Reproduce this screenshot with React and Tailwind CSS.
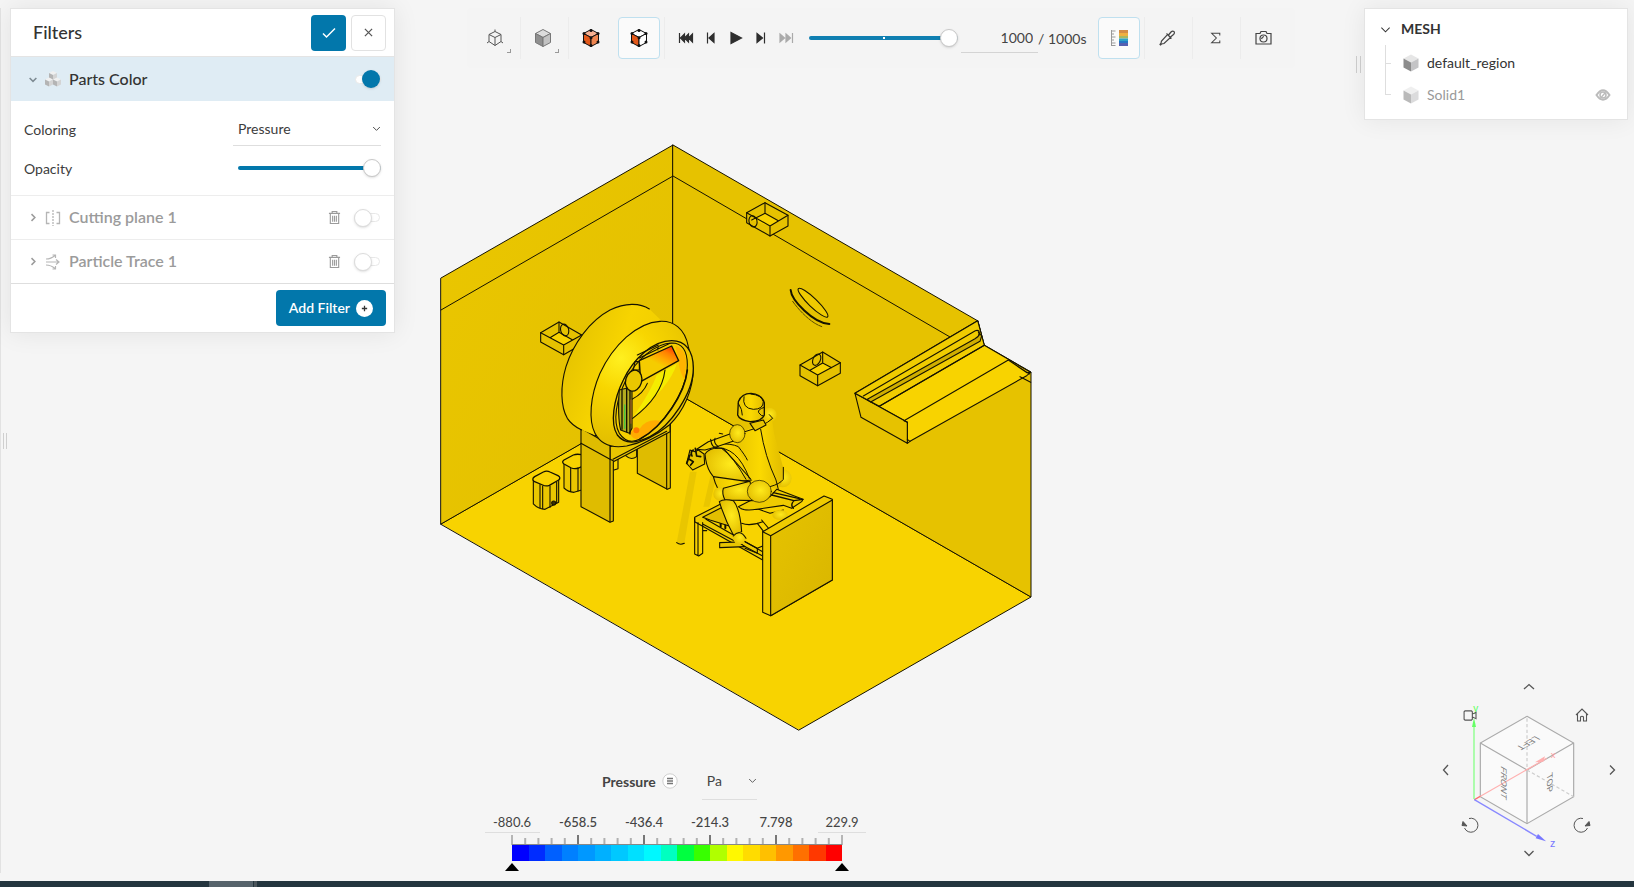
import React from "react";

const ICON = "h-4 w-4 fill-none stroke-current";

/* ---------- small icons ---------- */

function Chevron({ dir = "down", className = "h-3 w-3", width = 1.3 }) {
  const d = {
    down: "M1.5 4 6 8.500 10.500 4",
    right: "M4 1.500 8.500 6 4 10.500",
    left: "M8 1 3.500 6 8 11",
    up: "M1 8 6 3.500 11 8",
  }[dir];
  return (
    <svg viewBox="0 0 12 12" className={`fill-none stroke-current ${className}`} strokeWidth={width} aria-hidden="true">
      <path d={d} />
    </svg>
  );
}

function Cube({ top, left, right, stroke = "none", dots = false, className = "h-[18px] w-[18px]", faded = false }) {
  return (
    <svg viewBox="0 0 18 18" className={`${className} ${faded ? "opacity-60" : ""}`} aria-hidden="true">
      <g stroke={stroke} strokeWidth="1" strokeLinejoin="round">
        <path d="M9 .5 16.500 4.500 9 8.500 1.500 4.500Z" fill={top} />
        <path d="M1.500 4.500 9 8.500V17.500L1.500 13.500Z" fill={left} />
        <path d="M16.500 4.500 9 8.500V17.500L16.500 13.500Z" fill={right} />
      </g>
      {dots && (
        <g fill="#111">
          {[[9, 1.500], [16, 4.500], [2, 4.500], [9, 8.800], [2, 13], [16, 13], [9, 16.500]].map(([x, y]) => (
            <circle key={`${x}-${y}`} cx={x} cy={y} r="1.500" />
          ))}
        </g>
      )}
    </svg>
  );
}

function PartsIcon() {
  const cube = (x, y) => (
    <g transform={`translate(${x} ${y})`}>
      <path d="M4 0 8 2 4 4 0 2Z" fill="#f0f0f0" />
      <path d="M0 2 4 4V9L0 7Z" fill="#b4b4b4" />
      <path d="M8 2 4 4V9L8 7Z" fill="#d4d4d4" />
    </g>
  );
  return (
    <svg viewBox="0 0 16 16" className="h-4 w-4" aria-hidden="true">
      {cube(4, 0)}
      {cube(0, 6.5)}
      {cube(8, 6.5)}
    </svg>
  );
}

function CutIcon() {
  return (
    <svg viewBox="0 0 16 16" className={ICON} strokeWidth="1.300" aria-hidden="true">
      <path d="M4.500 2.500H1.500V13.500H4.500M11.500 2.500H14.500V13.500H11.500" />
      <path d="M8 0V16" strokeDasharray="2 1" />
    </svg>
  );
}

function TraceIcon() {
  return (
    <svg viewBox="0 0 16 16" className={ICON} strokeWidth="1.200" aria-hidden="true">
      <path d="M1 8H14M11 5.500 14 8 11 10.500M1 5Q6 5 10 1.500M7.500 1H10.500V4M1 11Q6 11 10 14.500M7.500 15H10.500V12" />
    </svg>
  );
}

function TrashIcon() {
  return (
    <svg viewBox="0 0 14 16" className="h-[15px] w-[13px] fill-none stroke-current" strokeWidth="1.200" aria-hidden="true">
      <path d="M1 3.500H13M4.500 3V1.500H9.500V3M2.500 3.500V14.500H11.500V3.500M5 6V12.500M7 6V12.500M9 6V12.500" />
    </svg>
  );
}

/* ---------- filter panel ---------- */

function Toggle({ label, on = false }) {
  return (
    <label className="flex w-[26px] items-center">
      <input type="checkbox" defaultChecked={on} aria-label={label} className="peer sr-only" />
      <span className="flex h-[9px] w-full items-center rounded-full border border-[#e8e8e8] bg-white peer-checked:justify-end">
        <span
          className={
            on
              ? "h-[18px] w-[18px] shrink-0 rounded-full bg-[#0277ab] shadow"
              : "-ml-px h-[18px] w-[18px] shrink-0 rounded-full border border-[#dcdcdc] bg-white shadow-sm"
          }
        />
      </span>
    </label>
  );
}

function FilterRow({ icon, name }) {
  return (
    <li className="flex h-11 items-center border-t border-[#ededed] pr-[14px] pl-4 text-[#9b9b9b]">
      <button type="button" className="flex flex-1 items-center text-left" aria-expanded="false">
        <Chevron dir="right" className="h-[9px] w-3" width={2} />
        <span className="ml-[6px] text-[#b5b5b5]">{icon}</span>
        <span className="ml-2 pb-[2px] text-base font-semibold">{name}</span>
      </button>
      <button type="button" aria-label={`Delete ${name}`} className="mr-[13px]">
        <TrashIcon />
      </button>
      <Toggle label={`Enable ${name}`} />
    </li>
  );
}

const SLIDER =
  "h-[18px] cursor-pointer appearance-none bg-transparent [&::-webkit-slider-thumb]:-mt-[7px] [&::-webkit-slider-thumb]:h-[18px] [&::-webkit-slider-thumb]:w-[18px] [&::-webkit-slider-thumb]:appearance-none [&::-webkit-slider-thumb]:rounded-full [&::-webkit-slider-thumb]:border [&::-webkit-slider-thumb]:border-[#c8c8c8] [&::-webkit-slider-thumb]:bg-white [&::-webkit-slider-thumb]:shadow-sm [&::-webkit-slider-runnable-track]:h-1 [&::-webkit-slider-runnable-track]:rounded-sm";

function FiltersPanel() {
  return (
    <section className="w-[385px] border border-[#e4e4e4] bg-white shadow-[0_0_24px_rgba(0,0,0,0.08)]">
      <header className="flex h-12 items-center border-b border-[#e4e4e4] pr-2 pl-[22px]">
        <h2 className="flex-1 pb-[2px] text-lg font-medium text-[#333]">Filters</h2>
        <button type="button" aria-label="Apply" className="flex h-9 w-[35px] items-center justify-center rounded bg-[#0277ab] text-white">
          <svg viewBox="0 0 14 12" className="h-3 w-[14px] fill-none stroke-current" strokeWidth="1.500" aria-hidden="true">
            <path d="M1 6.500 4.500 10 13 1.500" />
          </svg>
        </button>
        <button type="button" aria-label="Close" className="ml-[5px] flex h-9 w-[35px] items-center justify-center rounded border border-[#e2e2e2] text-[#555]">
          <svg viewBox="0 0 10 10" className="h-[9px] w-[9px] fill-none stroke-current" strokeWidth="1.400" aria-hidden="true">
            <path d="M1 1 9 9M9 1 1 9" />
          </svg>
        </button>
      </header>

      <div className="flex h-11 items-center bg-[#dfecf4] pr-[13px] pl-4">
        <button type="button" className="flex flex-1 items-center text-left" aria-expanded="true">
          <span className="text-[#7d8a92]">
            <Chevron className="h-[9px] w-3" width={2} />
          </span>
          <span className="ml-[6px]">
            <PartsIcon />
          </span>
          <span className="ml-2 text-base font-medium text-[#333]">Parts Color</span>
        </button>
        <Toggle label="Enable Parts Color" on />
      </div>

      <div className="flex flex-col gap-[5px] pt-[11px] pr-[13px] pb-[10px] pl-[13px] text-sm text-[#3c3c3c]">
        <div className="flex h-[34px] items-center justify-between">
          <label htmlFor="coloring" className="pt-[2px]">Coloring</label>
          <div className="flex h-[34px] w-[148px] items-center border-b border-[#dedede]">
            <select id="coloring" className="flex-1 appearance-none bg-transparent pl-[5px]">
              <option>Pressure</option>
            </select>
            <Chevron className="h-[9px] w-[9px]" width={1.2} />
          </div>
        </div>
        <div className="flex h-[34px] items-center justify-between">
          <label htmlFor="opacity" className="pt-[2px]">Opacity</label>
          <input
            id="opacity"
            type="range"
            defaultValue="100"
            className={`${SLIDER} w-[143px] [&::-webkit-slider-runnable-track]:bg-[#0277ab]`}
          />
        </div>
      </div>

      <ul>
        <FilterRow icon={<CutIcon />} name="Cutting plane 1" />
        <FilterRow icon={<TraceIcon />} name="Particle Trace 1" />
      </ul>

      <footer className="flex h-[49px] items-center justify-end border-t border-[#dedede] pr-2">
        <button type="button" className="flex h-9 items-center gap-[6px] rounded bg-[#0277ab] px-[13px] text-sm font-semibold text-white">
          Add Filter
          <svg viewBox="0 0 16 16" className="h-[17px] w-[17px]" aria-hidden="true">
            <circle cx="8" cy="8" r="8" fill="#fff" />
            <path d="M8 5.500V10.500M5.500 8H10.500" stroke="#333" strokeWidth="1.200" />
          </svg>
        </button>
      </footer>
    </section>
  );
}

/* ---------- toolbar ---------- */

function Tool({ label, active = false, divider = false, corner = false, children }) {
  return (
    <div className={`flex h-[42px] w-12 items-center ${divider ? "border-r border-[#ececec]" : ""}`}>
      <button
        type="button"
        aria-label={label}
        className={
          active
            ? "mx-[1px] flex h-[42px] w-[42px] items-center justify-center rounded border border-[#bfe0ef] bg-[#fafafa]"
            : "relative flex h-[42px] w-[44px] items-center justify-center text-[#444]"
        }
      >
        {children}
        {corner && <span className="absolute right-[6px] bottom-[6px] h-1 w-1 border-r border-b border-[#999]" />}
      </button>
    </div>
  );
}

const PLAYBACK = [
  { label: "First step", d: "M1.500 2V12M6.500 3 2.500 7 6.500 11ZM10.500 3 6.500 7 10.500 11ZM14.500 3 10.500 7 14.500 11Z" },
  { label: "Previous step", d: "M4.500 1.500V12.500M11 2.500 6 7 11 11.500Z" },
  { label: "Play", d: "M3 1.500 13.500 7 3 12.500Z" },
  { label: "Next step", d: "M11.500 1.500V12.500M4 2.500 9.500 7 4 11.500Z" },
  { label: "Last step", d: "M14.500 2V12M2 3 6.500 7 2 11ZM8 3 12.500 7 8 11Z", off: true },
];

function Toolbar() {
  return (
    <div className="ml-[37px] flex h-15 items-center self-start rounded bg-[#f4f4f4] px-[6px]" role="toolbar">
      <Tool label="Projection" divider corner>
        <svg viewBox="0 0 18 18" className="h-[18px] w-[18px] fill-none" stroke="#555" strokeWidth="1" strokeLinejoin="round" aria-hidden="true">
          <path d="M9 2.500 15 5.500V12.500L9 16.500 3 12.500V5.500ZM3 5.500 9 8.500 15 5.500M9 8.500V16.500M9 .5V2.500M1 14 3 12.500M17 14 15 12.500" />
        </svg>
      </Tool>
      <Tool label="Render mode" divider corner>
        <Cube top="#dcdcdc" left="#8f8f8f" right="#c2c2c2" stroke="#777" />
      </Tool>
      <Tool label="Show surfaces">
        <Cube top="#f6b092" left="#e2581a" right="#ee8550" stroke="#111" dots />
      </Tool>
      <Tool label="Show edges" active divider>
        <Cube top="#fff" left="#e2581a" right="#fff" stroke="#111" dots />
      </Tool>

      <div className="flex w-[432px] items-center pl-2">
        {PLAYBACK.map((b) => (
          <button key={b.label} type="button" aria-label={b.label} disabled={b.off} className="flex h-8 w-[25px] items-center justify-center">
            <svg viewBox="0 0 16 14" className={`h-[14px] w-4 ${b.off ? "text-[#aaa]" : "text-[#2e2e2e]"}`} fill="currentColor" stroke="currentColor" strokeWidth="1.200" aria-hidden="true">
              <path d={b.d} />
            </svg>
          </button>
        ))}
        <input
          type="range"
          aria-label="Time step"
          defaultValue="100"
          className={`${SLIDER} ml-[11px] w-[149px] [&::-webkit-slider-runnable-track]:[background:linear-gradient(#fff,#fff)_center/2px_2px_no-repeat,#0f7fb1]`}
        />
        <input
          type="text"
          aria-label="Current time"
          defaultValue="1000"
          className="ml-[3px] h-[30px] w-[77px] border-b border-[#d4d4d4] bg-transparent pr-[5px] text-right text-sm text-[#444]"
        />
        <span className="pt-[2px] text-sm text-[#444]">/ 1000s</span>
      </div>

      <Tool label="Legend" active divider>
        <svg viewBox="0 0 17 16" className="h-4 w-[17px]" aria-hidden="true">
          <path d="M.5 0V16M0 1H4.500M0 4H3M0 7H4.500M0 10H3M0 13H4.500M0 15.500H4.500" stroke="#999" fill="none" />
          <path d="M8 0H17V3H8Z" fill="#d58c46" />
          <path d="M8 3H17V6H8Z" fill="#f0b040" />
          <path d="M8 6H17V8.500H8Z" fill="#a9b860" />
          <path d="M8 8.500H17V11H8Z" fill="#2fa3c4" />
          <path d="M8 11H17V13H8Z" fill="#2477c4" />
          <path d="M8 13H17V16H8Z" fill="#5560b0" />
        </svg>
      </Tool>
      <Tool label="Pick value" divider>
        <svg viewBox="0 0 16 16" className={ICON} strokeWidth="1.200" aria-hidden="true">
          <path d="M8.500 4.500 11.500 7.500 5 13.500 2.500 14 1.500 15 1 14.500 2 13 2.500 11ZM7.500 3.500 12.500 8.500M9.500 5 12 2Q13.500.5 15 1.500 16 3 14.500 4.500L11.500 7" />
        </svg>
      </Tool>
      <Tool label="Statistics" divider>
        <svg viewBox="0 0 12 14" className="h-3 w-[11px] fill-none stroke-current" strokeWidth="1.200" aria-hidden="true">
          <path d="M11 4V1.500H1.500L7 7 1.500 12.500H11V10" />
        </svg>
      </Tool>
      <Tool label="Screenshot">
        <svg viewBox="0 0 17 16" className="h-4 w-[17px] fill-none stroke-current" strokeWidth="1.200" aria-hidden="true">
          <path d="M1 3.500H5L6 1.500H11L12 3.500H16V14H1Z" />
          <circle cx="8.500" cy="8.500" r="3.500" />
          <path d="M6.500 9Q7 7 9 6.500" />
        </svg>
      </Tool>
    </div>
  );
}

/* ---------- 3D scene ---------- */

const WALL = "#e6c200";
const FLOOR = "#f8d300";
const SIDE = "#dfbc00";

function Scene() {
  return (
    <svg viewBox="430 135 610 605" className="mt-[67px] w-[610px] shrink-0" role="img" aria-label="Pressure on room surfaces" strokeLinejoin="round" strokeLinecap="round">
      <defs>
        <linearGradient id="leftWall" x1="0" y1="0" x2="1" y2="1">
          <stop offset="0" stopColor="#ebc700" />
          <stop offset="1" stopColor="#e2bf00" />
        </linearGradient>
        <linearGradient id="drum" x1="0" y1="0" x2="1" y2="0.4">
          <stop offset="0" stopColor="#dfbd00" />
          <stop offset="0.5" stopColor="#f7d400" />
          <stop offset="1" stopColor="#edc900" />
        </linearGradient>
        <radialGradient id="rim" gradientUnits="userSpaceOnUse" cx="272" cy="205" r="250">
          <stop offset="0" stopColor="#fff020" />
          <stop offset="0.4" stopColor="#f8d600" />
          <stop offset="1" stopColor="#e4c000" />
        </radialGradient>
        <radialGradient id="ball" cx="0.55" cy="0.45" r="0.6">
          <stop offset="0" stopColor="#ffea1c" />
          <stop offset="1" stopColor="#e3be00" />
        </radialGradient>
        <linearGradient id="body" x1="0" y1="0" x2="1" y2="0">
          <stop offset="0" stopColor="#e9c600" />
          <stop offset="0.5" stopColor="#fbd900" />
          <stop offset="1" stopColor="#e0bb00" />
        </linearGradient>
        <linearGradient id="panel" x1="0" y1="0" x2="1" y2="1">
          <stop offset="0" stopColor="#e6c300" />
          <stop offset="1" stopColor="#d9b600" />
        </linearGradient>
        <linearGradient id="hot" gradientUnits="userSpaceOnUse" x1="375" y1="260" x2="425" y2="165">
          <stop offset="0.350" stopColor="#f5cc00" />
          <stop offset="0.550" stopColor="#ffa800" />
          <stop offset="0.750" stopColor="#ff8000" />
          <stop offset="0.900" stopColor="#ff4a00" />
        </linearGradient>
      </defs>

      {/* room shell */}
      <g stroke="#151200" strokeWidth="1">
        <path d="M441 524 582 443 673 391 1031 597 799 730Z" fill={FLOOR} />
        <path d="M441 278 673 145V391L441 524Z" fill="url(#leftWall)" />
        <path d="M673 145 978 321 984 345 1031 372V597L673 391Z" fill={WALL} />
        <path d="M441 310 673 176 950 337" fill="none" />
      </g>

      {/* right wall fittings */}
      <g transform="translate(730 130) scale(.33333)" stroke="#151200" strokeWidth="3.300" fill="none">
        <path d="M375 790 743 572 763 646 902 727 890 737 540 934 532 940 532 877Z" fill={FLOOR} />
        <path d="M375 790 393 862 532 940V877Z" fill={WALL} />
        <path d="M375 790 743 572 763 646 448 829Z" fill="#f0cc00" />
        <path d="M412 808 735 626Q755 614 745 606L755 618 750 634 422 816Z" fill="#cfae00" />
        <path d="M400 798 736 602Q752 598 746 616M448 829 763 646M522 872 835 690M835 690 890 728 902 727M870 740 902 757M835 690 898 732M532 877 522 872M532 928 540 934" />
        <path d="M50 248 105 218 174 256V288L120 318 50 278Z" fill={WALL} />
        <path d="M65 270 105 250 145 272 120 288Z" fill={FLOOR} stroke="none" />
        <path d="M50 248 120 288 174 256M120 288V318M105 218V250L145 272M105 250 65 270" />
        <ellipse cx="69" cy="274" rx="12" ry="17" transform="rotate(-12 69 274)" />
        <path d="M210 705 278 666 331 698V730L263 767 210 737Z" fill={WALL} />
        <path d="M240 721 278 699 305 713 263 735Z" fill={FLOOR} stroke="none" />
        <path d="M210 705 263 735 331 698M263 735V767M278 666V699L305 713M278 699 240 721" />
        <ellipse cx="260" cy="689" rx="11" ry="18" transform="rotate(25 260 689)" />
        <ellipse cx="249" cy="518" rx="13" ry="61" transform="rotate(-46 249 518)" fill="#efca00" />
        <path d="M182 480C184 510 250 580 298 582" strokeWidth="6" />
        <path d="M188 514C210 545 245 580 276 590" strokeWidth="2" strokeDasharray="9 3" />
      </g>

      {/* fan, table and bins */}
      <g transform="translate(530 290) scale(.33333)" stroke="#151200" strokeWidth="3.300" fill="none">
        <path d="M32 128 87 96 155 135V163L101 194 32 156Z" fill={WALL} />
        <path d="M60 143 87 127 128 150 101 165Z" fill={FLOOR} stroke="none" />
        <path d="M32 128 101 165 155 135M101 165V194M87 96V127L128 150M87 127 60 143" />
        <ellipse cx="104" cy="120" rx="12" ry="18" transform="rotate(-15 104 120)" />

        <path d="M102 518V594Q114 606 132 607L155 600V515Z" fill="#eac700" />
        <path d="M155 494Q140 491 130 495L102 510Q94 516 102 522L124 534Q134 538 146 534L155 530" fill={FLOOR} strokeWidth="4" />
        <path d="M122 535V604M144 534V603" />
        <path d="M10 572V642Q24 657 45 658L86 637V568Z" fill="#eac700" />
        <path d="M12 574Q4 567 14 560L40 546Q50 541 60 546L84 557Q94 563 86 570L58 586Q48 590 38 585Z" fill={FLOOR} strokeWidth="4" />
        <path d="M30 584V654M38 588V656M60 588V652M80 576V638" />
        <circle cx="71" cy="639" r="6" fill="#3b3300" />
        <path d="M287 490V497Q303 512 320 500V470" fill="#eac700" />
        <path d="M250 500 264 470M252 540 264 536V500" />
        <path d="M322 455V550L412 598 421 594V400Z" fill={SIDE} />
        <path d="M410 415V597" />
        <path d="M240 470 420 400V425L250 515 240 508Z" fill="#e9c600" />
        <path d="M249 508 410 424" />
        <path d="M153 415V650L240 697 250 693V512L240 508V465Z" fill={SIDE} />
        <path d="M153 460 240 508V695" />

        <path d="M358 57C330 38 285 38 240 60 180 92 130 160 108 230 90 290 92 350 112 385 125 405 150 418 180 430L300 460 475 170Z" fill="url(#drum)" stroke="none" />
        <path d="M358 57C330 38 285 38 240 60 180 92 130 160 108 230 90 290 92 350 112 385 125 405 138 412 155 420" />
        <path d="M475 170C465 115 430 92 390 94 320 98 250 165 210 250 180 320 175 390 195 430 215 468 250 475 290 468 330 460 380 435 418 405 460 365 490 300 490 235Z" fill="url(#rim)" />
        <path d="M425 152C370 152 310 205 280 270 250 330 240 400 262 435 285 465 320 460 360 440 420 410 490 310 490 235 490 180 465 152 425 152Z" fill="#efca00" strokeWidth="4" />
        <path d="M425 159C378 160 318 208 288 270 258 330 248 395 268 430 285 455 305 460 330 447 400 410 472 300 472 225 472 180 455 159 425 159Z" fill="#f5cf00" />
        <path d="M436 168Q470 175 468 225L464 270Q446 240 446 212Z" fill="#ffb400" stroke="none" />
        <path d="M330 415Q350 385 390 392 380 430 318 448 300 440 300 425Z" fill="#ffac00" stroke="none" />
        <circle cx="319" cy="421" r="9" fill="#ff7b00" stroke="none" />
        <path d="M440 222Q420 290 310 380 365 300 380 255Z" fill="#f5ec00" stroke="none" />
        <path d="M405 240C398 300 355 350 308 385M352 280Q340 310 306 328" />
        <path d="M472 240C465 310 400 410 330 447" strokeWidth="5" />
        <path d="M268 300 306 290V415L298 430 272 420Q262 380 268 300Z" fill="#b3ac20" />
        <path d="M276 300V418M290 296V425M300 292V432" strokeWidth="4" />
        <path d="M284 345V415" stroke="#46c640" strokeWidth="4" />
        <path d="M303 330V400" stroke="#ad5a22" strokeWidth="3" />
        <path d="M328 212 425 168 446 212 332 275Z" fill="url(#hot)" strokeWidth="4" />
        <path d="M328 204 420 160M322 195 385 165M384 172V180M315 215H328V240H310Z" />
        <ellipse cx="311" cy="272" rx="24" ry="32" transform="rotate(16 311 272)" fill="#eac700" strokeWidth="4" />
      </g>

      {/* seated figure, stool and screen */}
      <g transform="translate(670 380) scale(.33333)" stroke="#151200" strokeWidth="3.300" fill="none">
        <path d="M60 275H80L43 490Q30 495 20 488Z" fill="#e9c600" stroke="none" />
        <path d="M122 285H140L118 380H100Z" fill="#e9c600" stroke="none" />
        <path d="M20 488Q30 496 43 490" />
        <path d="M152 380V440M166 388V445" strokeWidth="6" />
        <path d="M74 412 152 372 180 385 108 418 278 515V540L74 425Z" fill="#efcb00" />
        <path d="M98 412 160 380 185 440 120 420Z" fill="#e3bf00" />
        <path d="M74 415V522L86 528 98 520V428M84 428V526M98 432 278 528M100 452H110" />
        <path d="M149 488 205 486 225 500 149 503Z" fill="#e8c500" />
        <path d="M225 485 262 505 278 498M225 505 262 520 262 505M215 430Q240 440 278 425M262 430 285 460M275 420 300 450M258 385 300 400 340 390" />
        <ellipse cx="330" cy="405" rx="23" ry="15" fill="url(#ball)" stroke="none" />

        <circle cx="298" cy="105" r="22" fill="url(#ball)" stroke="none" />
        <circle cx="338" cy="295" r="27" fill="url(#ball)" stroke="none" />
        <path d="M105 222Q120 200 160 205L245 300 160 310Q110 290 105 222Z" fill="url(#ball)" />
        <path d="M200 165 240 145 305 112 312 160 340 265Q345 310 320 328L245 300 200 195Z" fill="url(#body)" stroke="none" />
        <path d="M225 155Q280 140 308 115L298 104M272 148Q285 230 318 300L325 328M340 262V298Q330 312 300 320M135 205Q200 195 238 295M155 205Q190 230 228 298M145 192Q185 190 205 200 225 225 232 240" strokeWidth="3" />
        <path d="M240 130 255 152 288 135 280 120Z" fill="#e7c400" />
        <path d="M80 208 115 185 190 158 200 180 140 200 105 210Z" fill="#f3cf00" />
        <path d="M122 178Q125 205 142 202M135 175Q130 190 145 200M148 160 158 162" />
        <path d="M50 250 68 270 104 252 102 222 85 210 75 215 60 210 55 230Z" fill="#e9c600" />
        <path d="M50 250 60 225M58 238 70 245 62 255M76 205 80 228 92 230M66 228Q60 215 70 210" strokeWidth="5" />
        <ellipse cx="202" cy="161" rx="23" ry="27" fill="url(#ball)" strokeWidth="2" />
        <path d="M205 65Q215 40 243 40 275 42 283 68V105Q275 125 240 125 208 120 203 105Z" fill="url(#body)" strokeWidth="4" />
        <path d="M222 50Q215 85 250 88 280 88 280 65 275 45 243 42M205 70Q218 90 217 105M283 82Q262 88 266 98 275 110 280 108" strokeWidth="3" />

        <path d="M205 380Q220 395 260 388L340 376 365 385 395 365 399 358 320 328 300 350 240 362Z" fill="#efcb00" />
        <path d="M305 345 372 362 399 358M372 362Q360 375 370 385M310 338 388 356" strokeWidth="4" />
        <path d="M130 290Q140 330 160 345L240 362 235 305Z" fill="url(#body)" />
        <circle cx="150" cy="342" r="20" fill="url(#ball)" stroke="none" />
        <path d="M160 325 240 304 250 362 165 360Q155 340 160 325Z" fill="url(#ball)" />
        <ellipse cx="268" cy="334" rx="36" ry="33" fill="url(#ball)" strokeWidth="2" />
        <path d="M148 365Q160 355 190 362 210 385 215 455L190 465Q165 420 148 365Z" fill="url(#ball)" />
        <circle cx="208" cy="474" r="19" fill="url(#ball)" stroke="none" />
        <path d="M190 468Q210 445 228 475" />

        <path d="M278 455 462 348 487 358V600L302 707 278 697Z" fill="#efcb00" />
        <path d="M302 467 487 360V600L302 707Z" fill="url(#panel)" />
        <path d="M278 455 302 467" />
      </g>
    </svg>
  );
}

/* ---------- legend ---------- */

const COLORS = [
  "#0000ff", "#002cff", "#0060ff", "#0080ff", "#0098ff", "#00b0ff", "#00c8ff", "#00e0ff", "#00f8ff", "#00ffc0",
  "#00ff40", "#38ff00", "#b0ff00", "#fff800", "#ffdc00", "#ffc000", "#ff9800", "#ff7000", "#ff3800", "#ff0000",
];
const LABELS = ["-658.5", "-436.4", "-214.3", "7.798"];
const TICKS = Array.from({ length: 26 }, (_, i) => i);

function Legend() {
  const end = "h-[22px] border-b border-[#dedede] bg-transparent text-center";
  return (
    <section aria-label="Legend" className="pb-[6px]">
      <div className="mt-[21px] ml-[172px] flex h-10 items-center text-sm text-[#444]">
        <span className="pt-[2px] font-bold">Pressure</span>
        <button type="button" aria-label="Legend settings" className="ml-[6px]">
          <svg viewBox="0 0 16 16" className="h-4 w-4" aria-hidden="true">
            <circle cx="8" cy="8" r="7.200" fill="#fff" stroke="#cfcfcf" />
            <path d="M5 5.500H11M5 8H11M5 10.500H11" stroke="#777" strokeWidth="1.300" />
          </svg>
        </button>
        <div className="ml-6 flex h-[38px] w-[55px] items-center border-b border-[#dedede]">
          <select aria-label="Unit" className="w-10 flex-1 appearance-none bg-transparent pl-[5px]">
            <option>Pa</option>
          </select>
          <Chevron className="h-[9px] w-[9px]" width={1.1} />
        </div>
      </div>
      <div className="mt-[10px] ml-[49px] w-[396px]">
        <div className="grid grid-cols-6 items-center justify-items-center text-[13px] text-[#444]">
          <input aria-label="Minimum" defaultValue="-880.6" className={`${end} w-[55px]`} />
          {LABELS.map((l) => (
            <span key={l} className="pt-[2px] font-medium">{l}</span>
          ))}
          <input aria-label="Maximum" defaultValue="229.9" className={`${end} w-12`} />
        </div>
        <svg viewBox="0 0 346 10" className="mx-[25px] mt-[2px] h-[10px] w-[346px]" aria-hidden="true">
          {TICKS.map((i) => (
            <path
              key={i}
              d={`M${8 + i * 13.2} ${i % 5 ? 3 : 0}V10`}
              stroke={i % 5 ? "#b0b0b0" : "#777"}
              strokeWidth={i === 0 || i === 25 ? 1 : 2}
            />
          ))}
          <path d="M8 9.500H338" stroke="#888" />
        </svg>
        <div className="mx-[33px] flex h-4">
          {COLORS.map((c) => (
            <span key={c} className="flex-1" style={{ backgroundColor: c }} />
          ))}
        </div>
        <div className="mx-[26px] mt-[2px] flex justify-between">
          {["Lower bound", "Upper bound"].map((l) => (
            <button key={l} type="button" aria-label={l}>
              <svg viewBox="0 0 14 8" className="h-2 w-[14px]" aria-hidden="true">
                <path d="M7 0 14 8H0Z" />
              </svg>
            </button>
          ))}
        </div>
      </div>
    </section>
  );
}

/* ---------- mesh tree and view cube ---------- */

function MeshPanel() {
  return (
    <section className="flex-1 border border-[#e4e4e4] bg-white px-[15px] pt-1 pb-[10px] text-sm text-[#333] shadow-[0_0_24px_rgba(0,0,0,0.07)]">
      <button type="button" className="flex h-8 items-center gap-[10px] font-bold" aria-expanded="true">
        <Chevron className="h-[11px] w-[11px]" width={1.1} />
        MESH
      </button>
      <ul className="ml-[5px]">
        <li className="flex h-9 items-center">
          <span className="h-full w-[6px] border-l border-[#dedede] pt-[18px]">
            <span className="block border-t border-[#dedede]" />
          </span>
          <span className="ml-[11px]">
            <Cube top="#e6e6e6" left="#8c8c8c" right="#c4c4c6" />
          </span>
          <span className="ml-[7px]">default_region</span>
        </li>
        <li className="flex h-7 items-center text-[#999]">
          <span className="h-[14px] w-[6px] self-start border-b border-l border-[#dedede]" />
          <span className="ml-[11px]">
            <Cube top="#e6e6e6" left="#8c8c8c" right="#c4c4c6" faded />
          </span>
          <span className="ml-[7px] flex-1">Solid1</span>
          <button type="button" aria-label="Show Solid1" className="mr-[1px]">
            <svg viewBox="0 0 16 12" className="h-3 w-4 fill-none stroke-[#bbb]" strokeWidth="2" aria-hidden="true">
              <path d="M1.500 6Q8-3.500 14.500 6 8 15.500 1.500 6Z" />
              <circle cx="8" cy="6" r="3" strokeWidth="1.500" />
              <path d="M6.500 8 10 4" strokeWidth="1.300" />
            </svg>
          </button>
        </li>
      </ul>
    </section>
  );
}

function ViewCube() {
  const btn = "flex h-6 w-6 items-center justify-center text-[#555]";
  return (
    <nav aria-label="View orientation" className="mr-1 grid grid-cols-[24px_142px_24px] grid-rows-[24px_142px_24px] items-center justify-items-center">
      <button type="button" aria-label="Rotate up" className={`${btn} col-start-2`}>
        <Chevron dir="up" />
      </button>
      <button type="button" aria-label="Rotate left" className={`${btn} col-start-1 row-start-2`}>
        <Chevron dir="left" />
      </button>
      <svg viewBox="1457 699 144 144" className="col-start-2 row-start-2 h-36 w-36 overflow-visible" aria-hidden="true">
        <g transform="translate(1420 670) scale(.33333)" fill="none" strokeWidth="3.500">
          <path d="M321 142 461 222V383L321 464 181 383V222Z" fill="#fafafa" stroke="#aaa" />
          <path d="M181 222 321 303 461 222M321 303V464" stroke="#aaa" />
          <path d="M321 148V300M321 303 461 383" stroke="#ccc" strokeDasharray="10 7" />
          <path d="M163 392 380 268" stroke="#ffb0b0" />
          <path d="M345 280 375 262 370 278Z" fill="#ffb0b0" />
          <path d="M163 392 181 382" stroke="#ff6b6b" />
          <path d="M162 390V165" stroke="#8f8" strokeWidth="4" />
          <path d="M162 146 168 174H156Z" fill="#6f6" />
          <path d="M163 392 350 502" stroke="#88f" strokeWidth="4" />
          <path d="M378 517 347 508 354 495Z" fill="#77f" />
          <g fontFamily="Liberation Sans, sans-serif" fontSize="28" textAnchor="middle" fill="#7c7c7c">
            <text transform="matrix(-.87 .5 -.87 -.5 324 222)" y="9">LEFT</text>
            <text transform="matrix(0 1 -.87 -.5 250 342)" y="9">FRONT</text>
            <text transform="matrix(0 1 -.87 .5 390 342)" y="9">TOP</text>
            <text x="399" y="268" fontSize="28" fill="#ff9d9d">x</text>
            <text x="167" y="130" fontSize="30" fill="#5f5">y</text>
            <text x="398" y="533" fontSize="32" fill="#77f">z</text>
          </g>
        </g>
      </svg>
      <div className="col-start-2 row-start-2 grid h-full w-full grid-cols-2 content-between py-1 pr-[6px]">
        <button type="button" aria-label="Camera" className={btn}>
          <svg viewBox="0 0 16 12" className="h-[11px] w-[15px] fill-none stroke-current" strokeWidth="1.200" aria-hidden="true">
            <path d="M2 1H9L10 2V10L9 11H2L1 10V2ZM10 4.500 14 2.500V9.500L10 7.500" />
          </svg>
        </button>
        <button type="button" aria-label="Home view" className={`${btn} justify-self-end`}>
          <svg viewBox="0 0 14 14" className="h-[14px] w-[14px] fill-none stroke-current" strokeWidth="1.100" aria-hidden="true">
            <path d="M1 7 7 1 13 7M2.500 6V13H5.500V9Q7 7.500 8.500 9V13H11.500V6" />
          </svg>
        </button>
        <button type="button" aria-label="Roll left" className={btn}>
          <svg viewBox="0 0 18 18" className="h-[18px] w-[18px] fill-none stroke-current" aria-hidden="true">
            <path d="M8 2.500A7 7 0 1 1 3.500 12" />
            <path d="M1 9.500 6 10 2 5.500Z" fill="currentColor" />
          </svg>
        </button>
        <button type="button" aria-label="Roll right" className={`${btn} justify-self-end`}>
          <svg viewBox="0 0 18 18" className="h-[18px] w-[18px] fill-none stroke-current" aria-hidden="true">
            <path d="M10 2.500A7 7 0 1 0 14.500 12" />
            <path d="M17 9.500 12 10 16 5.500Z" fill="currentColor" />
          </svg>
        </button>
      </div>
      <button type="button" aria-label="Rotate right" className={`${btn} col-start-3 row-start-2`}>
        <Chevron dir="right" />
      </button>
      <button type="button" aria-label="Rotate down" className={`${btn} col-start-2 row-start-3`}>
        <Chevron />
      </button>
    </nav>
  );
}

export default function App() {
  return (
    <div className="flex min-h-screen flex-col bg-[#f5f5f5] font-[Lato,sans-serif]">
      <main className="flex flex-1">
        <aside className="flex shrink-0">
          <div className="mt-2 mb-2 flex w-[10px] items-center border-l border-[#e2e2e2] pl-[2px]">
            <span className="h-4 w-1 border-x border-[#cfcfcf]" />
          </div>
          <div className="pt-2">
            <FiltersPanel />
          </div>
        </aside>

        <div className="flex flex-1 flex-col pt-2 pl-[35px]">
          <Toolbar />
          <Scene />
          <Legend />
        </div>

        <aside className="flex shrink-0 flex-col items-end justify-between pt-2 pr-[6px] pb-4">
          <div className="flex w-[272px] items-center gap-[3px]">
            <span className="h-[17px] w-[5px] border-x border-[#cfcfcf]" />
            <MeshPanel />
          </div>
          <ViewCube />
        </aside>
      </main>
      <footer className="flex h-[6px] bg-[#24353e]">
        <span className="ml-[209px] w-11 bg-[#56636b]" />
        <span className="ml-[1px] w-[3px] bg-[#4a545a]" />
      </footer>
    </div>
  );
}
